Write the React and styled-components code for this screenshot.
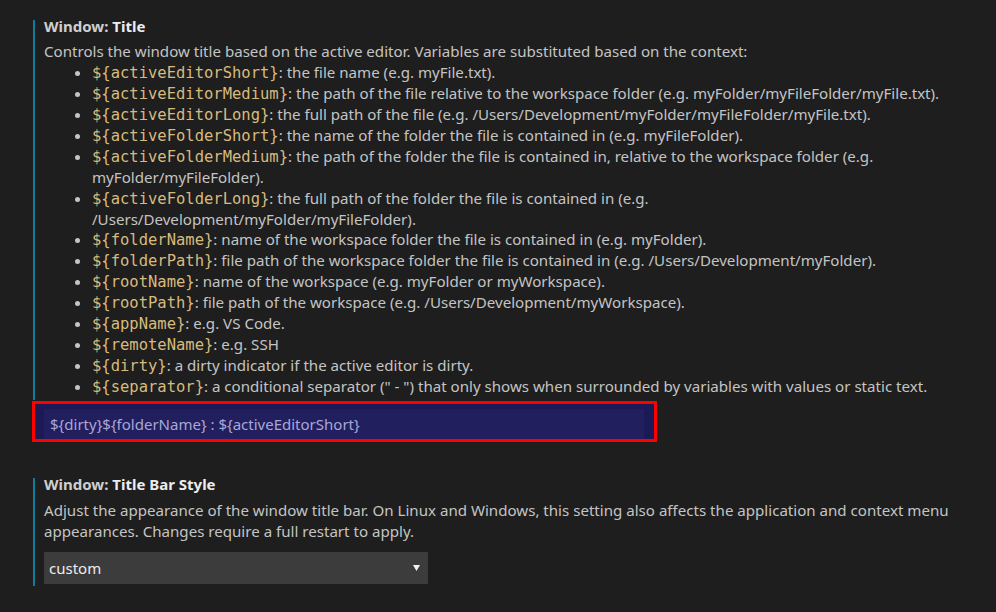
import React from "react";
import styled, { createGlobalStyle } from "styled-components";

const GlobalStyle = createGlobalStyle`
  html, body { margin: 0; padding: 0; background: #1e1e1e; }
  body {
    font-family: "Noto Sans", "Open Sans", sans-serif;
    color: #c6c6c6;
    -webkit-font-smoothing: antialiased;
  }
`;

const Page = styled.div`
  width: 996px;
  height: 612px;
  box-sizing: border-box;
  padding: 20px 20px 0 33px;
  overflow: hidden;
  background: #1e1e1e;
`;

const SettingItem = styled.section`
  border-left: 2px solid #0c7d9d;
  padding: 0 0 ${(p) => p.$bottom || 0}px 9px;
  margin-top: ${(p) => p.$top || 0}px;
`;

const Title = styled.div`
  font-size: 15px;
  line-height: 12px;
  font-weight: 700;
  color: #cfcfcf;
  white-space: nowrap;
`;

const Label = styled.span`
  color: #ececec;
`;

const Description = styled.div`
  margin-top: ${(p) => p.$gap || 9}px;
  font-size: 15.1px;
  line-height: 20.93px;
  color: #c4c4c4;
`;

const List = styled.ul`
  margin: 0;
  padding-left: 48px;
  list-style: disc;
`;

const Item = styled.li`
  font-size: 15.1px;
  line-height: 20.93px;
  color: #c4c4c4;
`;

const Code = styled.code`
  font-family: "DejaVu Sans Mono", "Liberation Mono", monospace;
  font-size: 15.5px;
  line-height: 1;
  color: #d7ba7d;
`;

const Highlight = styled.div`
  margin-left: -1px;
  width: 625px;
  box-sizing: border-box;
  border: 3px solid #ff0000;
  border-top-width: 3px;
  background: #1b1a57;
  padding: 5px 10px 0 9px;
  margin-top: 1px;
`;

const TextInput = styled.div`
  height: 30px;
  box-sizing: border-box;
  background: #221f5e;
  color: #a9a7d8;
  font-size: 15px;
  line-height: 30px;
  padding-left: 6px;
  white-space: nowrap;
`;

const Select = styled.div`
  margin-top: 10px;
  width: 384px;
  height: 32px;
  box-sizing: border-box;
  background: #3c3c3c;
  color: #ededed;
  display: flex;
  align-items: center;
  justify-content: space-between;
  padding: 0 8px 0 5px;
  font-size: 15px;
`;

const Arrow = styled.svg`
  display: block;
  width: 7px;
  height: 6px;
`;

const vars = [
  ["${activeEditorShort}", "the file name (e.g. myFile.txt)."],
  ["${activeEditorMedium}", "the path of the file relative to the workspace folder (e.g. myFolder/myFileFolder/myFile.txt)."],
  ["${activeEditorLong}", "the full path of the file (e.g. /Users/Development/myFolder/myFileFolder/myFile.txt)."],
  ["${activeFolderShort}", "the name of the folder the file is contained in (e.g. myFileFolder)."],
  ["${activeFolderMedium}", "the path of the folder the file is contained in, relative to the workspace folder (e.g. myFolder/myFileFolder)."],
  ["${activeFolderLong}", "the full path of the folder the file is contained in (e.g. /Users/Development/myFolder/myFileFolder)."],
  ["${folderName}", "name of the workspace folder the file is contained in (e.g. myFolder)."],
  ["${folderPath}", "file path of the workspace folder the file is contained in (e.g. /Users/Development/myFolder)."],
  ["${rootName}", "name of the workspace (e.g. myFolder or myWorkspace)."],
  ["${rootPath}", "file path of the workspace (e.g. /Users/Development/myWorkspace)."],
  ["${appName}", "e.g. VS Code."],
  ["${remoteName}", "e.g. SSH"],
  ["${dirty}", "a dirty indicator if the active editor is dirty."],
  ["${separator}", "a conditional separator (\" - \") that only shows when surrounded by variables with values or static text."],
];

export default function App() {
  return (
    <>
      <GlobalStyle />
      <Page>
        <SettingItem $bottom={3}>
          <Title>
            Window: <Label>Title</Label>
          </Title>
          <Description>
            Controls the window title based on the active editor. Variables are substituted based on the context:
          </Description>
          <List>
            {vars.map(([k, v]) => (
              <Item key={k}>
                <Code>{k}</Code>: {v}
              </Item>
            ))}
          </List>
        </SettingItem>
        <Highlight>
          <TextInput>{"${dirty}${folderName} : ${activeEditorShort}"}</TextInput>
        </Highlight>
        <SettingItem $top={36} $bottom={2}>
          <Title>
            Window: <Label>Title Bar Style</Label>
          </Title>
          <Description $gap={10}>
            Adjust the appearance of the window title bar. On Linux and Windows, this setting also affects the application and context menu appearances. Changes require a full restart to apply.
          </Description>
          <Select>
            <span>custom</span>
            <Arrow viewBox="0 0 7 6">
              <polygon points="0,0 7,0 3.5,6" fill="#f2f2f2" />
            </Arrow>
          </Select>
        </SettingItem>
      </Page>
    </>
  );
}
